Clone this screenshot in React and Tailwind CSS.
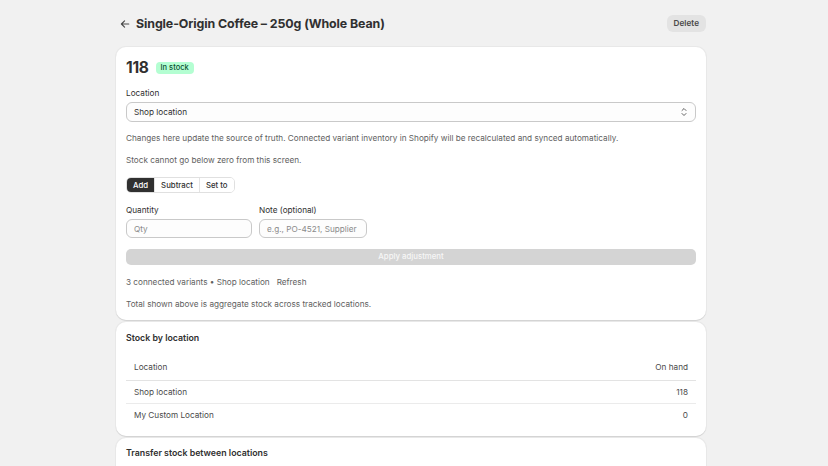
import React, { useState } from 'react';

const rows = [
  { name: 'Shop location', qty: 118 },
  { name: 'My Custom Location', qty: 0 },
];

export default function App() {
  const [mode, setMode] = useState('Add');

  return (
    <div className="min-h-screen bg-[#f1f1f1] text-[#303030]" style={{ fontFamily: 'Inter, "Noto Sans", sans-serif' }}>
      <div className="w-[590px] ml-[116px]">
        {/* Page header */}
        <div className="h-[47px] flex items-center">
          <button className="w-[12px] h-[14px] ml-[3px] flex items-center justify-center text-[#4a4a4a]">
            <svg width="10" height="10" viewBox="0 0 12 12" fill="none" stroke="currentColor" strokeWidth="1.4" strokeLinecap="round" strokeLinejoin="round">
              <path d="M10.5 6H1.8M5.5 2.2 1.7 6l3.8 3.8" />
            </svg>
          </button>
          <h1 className="ml-[5px] text-[12.4px] leading-[18px] font-bold tracking-[-0.1px]">Single-Origin Coffee – 250g (Whole Bean)</h1>
          <button className="ml-auto h-[17px] px-[7px] rounded-[6px] bg-[#e3e3e3] text-[8.2px] font-semibold text-[#4a4a4a]">Delete</button>
        </div>

        <div className="flex flex-col gap-[2px]">
          {/* Adjustment card */}
          <div className="bg-white rounded-[10px] shadow-[0_1px_0_#d4d4d4,0_0_0_1px_#e8e8e8] px-[10px] pt-[10px] pb-[10px]">
            <div className="h-[21px] flex items-center gap-[7px]">
              <span className="text-[15.5px] font-bold tracking-[-0.3px]">118</span>
              <span className="h-[12px] px-[5px] rounded-[4px] bg-[#b4fed2] text-[7.5px] leading-[12px] text-[#0c5132] font-medium">In stock</span>
            </div>

            <div className="mt-[9px] text-[8.2px] leading-[12px]">Location</div>
            <div className="mt-[3px] h-[20px] rounded-[6px] border border-[#c9c9c9] bg-[#fdfdfd] flex items-center px-[7px] text-[8.2px]">
              <span>Shop location</span>
              <svg className="ml-auto text-[#616161]" width="8" height="10" viewBox="0 0 8 10" fill="none" stroke="currentColor" strokeWidth="1" strokeLinecap="round" strokeLinejoin="round">
                <path d="M2 3.5 4 1.5l2 2M2 6.5l2 2 2-2" />
              </svg>
            </div>

            <p className="mt-[10px] text-[8.2px] leading-[12px] text-[#616161]">
              Changes here update the source of truth. Connected variant inventory in Shopify will be recalculated and synced automatically.
            </p>
            <p className="mt-[10px] text-[8.2px] leading-[12px] text-[#616161]">Stock cannot go below zero from this screen.</p>

            <div className="mt-[11px] flex">
              <div className="flex h-[16px] rounded-[5px] border border-[#e0e0e0] overflow-hidden text-[7.8px] leading-[14px] font-medium">
                {['Add', 'Subtract', 'Set to'].map((m, i) => (
                  <button
                    key={m}
                    onClick={() => setMode(m)}
                    className={
                      mode === m
                        ? 'px-[6px] bg-[#303030] text-white'
                        : 'px-[6px] bg-white text-[#303030] ' + (i > 0 ? 'border-l border-[#e3e3e3]' : '')
                    }
                  >
                    {m}
                  </button>
                ))}
              </div>
            </div>

            <div className="mt-[11px] flex gap-[7px]">
              <div className="w-[126px]">
                <div className="text-[8.2px] leading-[12px]">Quantity</div>
                <input className="block mt-[3px] w-full h-[19px] rounded-[6px] border border-[#c9c9c9] bg-[#fdfdfd] px-[7px] text-[8.2px] outline-none placeholder:text-[#8a8a8a]" placeholder="Qty" />
              </div>
              <div className="w-[108px]">
                <div className="text-[8.2px] leading-[12px]">Note (optional)</div>
                <input className="block mt-[3px] w-full h-[19px] rounded-[6px] border border-[#c9c9c9] bg-[#fdfdfd] px-[7px] text-[8.2px] outline-none placeholder:text-[#8a8a8a]" placeholder="e.g., PO-4521, Supplier restock" />
              </div>
            </div>

            <button className="block mt-[11px] w-full h-[16px] rounded-[5px] bg-[#d4d4d4] text-[7.8px] text-[#f7f7f7] font-medium">Apply adjustment</button>

            <div className="mt-[11px] text-[8.2px] leading-[12px] text-[#616161] flex gap-[7px]">
              <span>3 connected variants • Shop location</span>
              <button className="text-[#616161]">Refresh</button>
            </div>
            <p className="mt-[10px] text-[8.2px] leading-[12px] text-[#616161]">Total shown above is aggregate stock across tracked locations.</p>
          </div>

          {/* Stock by location */}
          <div className="bg-white rounded-[10px] shadow-[0_1px_0_#d4d4d4,0_0_0_1px_#e8e8e8] px-[10px] pt-[10px] pb-[9px]">
            <h2 className="text-[8.8px] leading-[12px] font-semibold">Stock by location</h2>
            <div className="mt-[11px] text-[8.2px] text-[#4a4a4a]">
              <div className="h-[26px] flex items-center justify-between px-[8px] border-b border-[#e3e3e3]">
                <span>Location</span>
                <span>On hand</span>
              </div>
              {rows.map((r, i) => (
                <div key={r.name} className={'h-[23px] flex items-center justify-between px-[8px] ' + (i < rows.length - 1 ? 'border-b border-[#ebebeb]' : '')}>
                  <span>{r.name}</span>
                  <span>{r.qty}</span>
                </div>
              ))}
            </div>
          </div>

          {/* Transfer */}
          <div className="bg-white rounded-[10px] shadow-[0_1px_0_#d4d4d4,0_0_0_1px_#e8e8e8] px-[10px] pt-[9px] pb-[40px]">
            <h2 className="text-[8.8px] leading-[12px] font-semibold">Transfer stock between locations</h2>
          </div>
        </div>
      </div>
    </div>
  );
}
